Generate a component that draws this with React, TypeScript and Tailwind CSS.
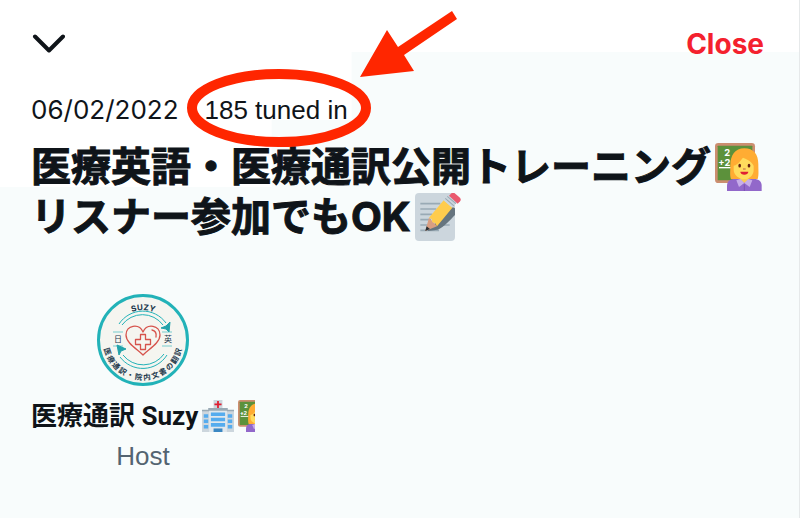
import React from 'react'
import clsx from 'clsx'

const RING_TEXT = '医療通訳・院内文書の翻訳'

export default function App() {
  return (
    <main
      className={clsx(
        'min-h-screen overflow-hidden border-r border-[#e6e9ea] bg-[#f8fcfc] px-[31px] text-[#0f1419]',
        "font-['Inter','Noto_Sans_CJK_JP',sans-serif]",
        'bg-[linear-gradient(#fff,#fff),linear-gradient(#fff,#fff),linear-gradient(#fff,#fff)] bg-no-repeat bg-[length:100%_52px,44%_120px,34%_187px]'
      )}>
      <header className="flex items-center justify-between pt-6 pb-[26px]">
        <button aria-label="Collapse" className="flex h-10 items-center">
          <svg viewBox="0 0 34 20" className="w-[34px] h-5" fill="none" stroke="currentColor" strokeWidth="4" strokeLinecap="round" strokeLinejoin="round">
            <path d="M4 2.500l14 14L32 2.500" />
          </svg>
        </button>
        <button className="px-1 text-[28px] leading-10 font-bold text-[#f4212e]">Close</button>
      </header>

      <div className="flex h-10 items-center gap-[26px] text-[26px] leading-10 whitespace-nowrap">
        <time dateTime="2022-06-02">06/02/2022</time>
        <span className="relative font-['Liberation_Sans',sans-serif]">
          185 tuned in
          <TunedInMarker />
        </span>
      </div>

      <h1 className="mt-3 text-[40px] leading-[50px] font-bold whitespace-nowrap [-webkit-text-stroke:1px_currentColor]">
        <span className="flex items-center gap-1">
          医療英語・医療通訳公開トレーニング
          <TeacherEmoji className="size-12 shrink-0" />
        </span>
        <span className="flex items-center gap-1">
          リスナー参加でもOK
          <MemoEmoji className="size-12 shrink-0" />
        </span>
      </h1>

      <section className="mt-[52px] flex w-56 flex-col items-center">
        <Avatar />
        <h2 className="mt-2.5 flex w-full items-center gap-1 overflow-hidden font-['Roboto','Noto_Sans_CJK_JP',sans-serif] text-[26px] leading-10 font-bold whitespace-nowrap">
          医療通訳 Suzy
          <HospitalEmoji className="size-8 shrink-0" />
          <TeacherEmoji className="size-8 shrink-0" />
        </h2>
        <p className="font-['Liberation_Sans',sans-serif] text-[26px] leading-10 text-[#536471]">Host</p>
      </section>
    </main>
  )
}

// Hand-drawn style ellipse and arrow over the listener count
function TunedInMarker() {
  return (
    <svg viewBox="0 0 275 142" className="pointer-events-none absolute -left-5 -top-20 h-[142px] w-[275px]" aria-hidden="true">
      <ellipse cx="94" cy="98" rx="87" ry="34" fill="none" stroke="#ff2600" strokeWidth="10" />
      <path d="M175 67L202 20l11 17L267 1l5 8-53 36 10 16z" fill="#ff2600" />
    </svg>
  )
}

function Avatar() {
  return (
    <svg viewBox="0 0 92 92" className="size-[92px]" role="img" aria-label="Suzy">
      <circle cx="46" cy="46" r="44.5" fill="#f5f5f0" stroke="#22b2b8" strokeWidth="3" />
      <g fill="#21374b" fontWeight="700" textAnchor="middle">
        {'SUZY'.split('').map((c, i) => (
          <text key={i} x="46" y="16" fontSize="8" transform={`rotate(${(i - 1.5) * 11} 46 46)`}>{c}</text>
        ))}
        {RING_TEXT.split('').map((c, i) => (
          <text key={i} x="46" y="86" fontSize="7.5" transform={`rotate(${72 - i * 13} 46 46)`}>{c}</text>
        ))}
      </g>
      <g fill="#21374b" fontSize="8" textAnchor="middle">
        <text x="21" y="48">日</text>
        <text x="71" y="48">英</text>
      </g>
      <g fill="none" stroke="#22b2b8" strokeWidth="1">
        <path d="M22 30A28.5 28.5 0 0 1 69 29M25 31A25.5 25.5 0 0 1 66 31" />
        <path d="M70 61A28.5 28.5 0 0 1 23 63M67 60A25.5 25.5 0 0 1 26 61" />
        <path d="M16 38h10M65 38h10M16 52h10M65 52h10" strokeWidth="0.6" />
      </g>
      <path d="M73 28l-1 10-3-3-5-1 5-2zM20 51l9 4-5 2-2 4z" fill="#22a3ab" stroke="#22a3ab" />
      <g fill="none" stroke="#d6534c" strokeWidth="1.3" strokeLinejoin="round" strokeLinecap="round">
        <path d="M46 61C40 55 29 49 29 41c0-10 13-12 17-3 4-9 17-7 17 3 0 8-11 14-17 20z" />
        <path d="M43.500 40.500h5v5h5v5h-5v5h-5v-5h-5v-5h5z" />
        <path d="M55 36q5 1 4 7" />
      </g>
    </svg>
  )
}

function TeacherEmoji({ className }: { className?: string }) {
  return (
    <svg viewBox="0 0 36 36" className={className} aria-hidden="true">
      <rect width="30" height="30" rx="2.500" fill="#cc8e70" />
      <rect x="2" y="2" width="26" height="26" rx="0.500" fill="#5c913b" />
      <g fill="#fff" fontSize="7" fontWeight="700">
        <text x="7" y="9.500">2</text>
        <text x="2.500" y="17">+2</text>
      </g>
      <path d="M3 18.500h10" stroke="#fff" />
      <path d="M12 27c-1-3-.5-5-.5-10C11.500 9 15 4 22 4s10.500 4.500 10.500 12c0 5 .500 8-.500 11z" fill="#ffac33" />
      <path d="M9 36v-4c0-3 2-5 6-5h14c4 0 6 2 6 5v4z" fill="#9268ca" />
      <path d="M19 23h6v5l-3 2-3-2z" fill="#f9ca55" />
      <path d="M14 17c4-1 5-4 7-6 2 1 6 2 8 6v3c0 4-3 7-7 7s-8-3-8-7z" fill="#ffdc5d" />
      <path d="M16 28l3-1 3 3 3-3 3 1-2 5-4-3-4 3z" fill="#c7ade8" />
      <path d="M22 31v5" stroke="#7b51b0" strokeWidth="0.700" />
      <ellipse cx="18.500" cy="17" rx="1" ry="1.400" fill="#662113" />
      <ellipse cx="25.500" cy="17" rx="1" ry="1.400" fill="#662113" />
      <path d="M21 19.500h2" stroke="#c1694f" strokeWidth="0.800" />
      <path d="M19 21.500h6c0 3-6 3-6 0z" fill="#df1f32" />
    </svg>
  )
}

function MemoEmoji({ className }: { className?: string }) {
  return (
    <svg viewBox="0 0 36 36" className={className} aria-hidden="true">
      <rect width="30" height="36" rx="3" fill="#ccd6dd" />
      <path d="M4 8h15M4 12h12M4 16h9M4 20h8M4 24h22M4 28h14" stroke="#99aab5" strokeWidth="1.300" />
      <path d="M9 28.500l8-1c5-2 9-7 13-11v-5l-2-1z" fill="#66757f" />
      <path d="M10.500 18.500L7.700 28.500 16.500 25z" fill="#d99e82" />
      <path d="M7.700 28.500l1-3.500 2.500 2z" fill="#292f33" />
      <path d="M10.500 18.500L21.500 5.500 28 11 16.500 25l-1.500-2.500-2-.5-.5-2.500z" fill="#ffcc4d" />
      <path d="M21.500 5.500l4-4.500 6.500 5.500-4 4.500z" fill="#ccd6dd" />
      <path d="M22.700 4.100l6.500 5.500M24.200 2.500l6.500 5.500" stroke="#99aab5" strokeWidth="0.800" />
      <path d="M25.500 2l1.500-1.500c1-1 2-1 3-.2l3.500 3c1 .9 1 2 .3 2.900L32 8z" fill="#ea596e" />
    </svg>
  )
}

function HospitalEmoji({ className }: { className?: string }) {
  return (
    <svg viewBox="0 0 36 36" className={className} aria-hidden="true">
      <path d="M13 0h10v10H13zM0 13h36v23H0z" fill="#ccd6dd" />
      <path d="M8 11h20v25H8z" fill="#e1e8ed" />
      <path d="M7 9h22v3H7zM0 11h8v2H0zM28 11h8v2h-8z" fill="#99aab5" />
      <path d="M18 1v8M14 5h8" stroke="#df1f32" strokeWidth="2" />
      <path d="M10 14h16v4H10zM10 20h16v4H10zM10 26h16v4H10zM2 16h5v4H2zM2 22h5v4H2zM2 28h5v4H2zM29 16h5v4h-5zM29 22h5v4h-5zM29 28h5v4h-5z" fill="#55acee" />
      <path d="M13 32h10v4H13z" fill="#3b88c3" />
    </svg>
  )
}
